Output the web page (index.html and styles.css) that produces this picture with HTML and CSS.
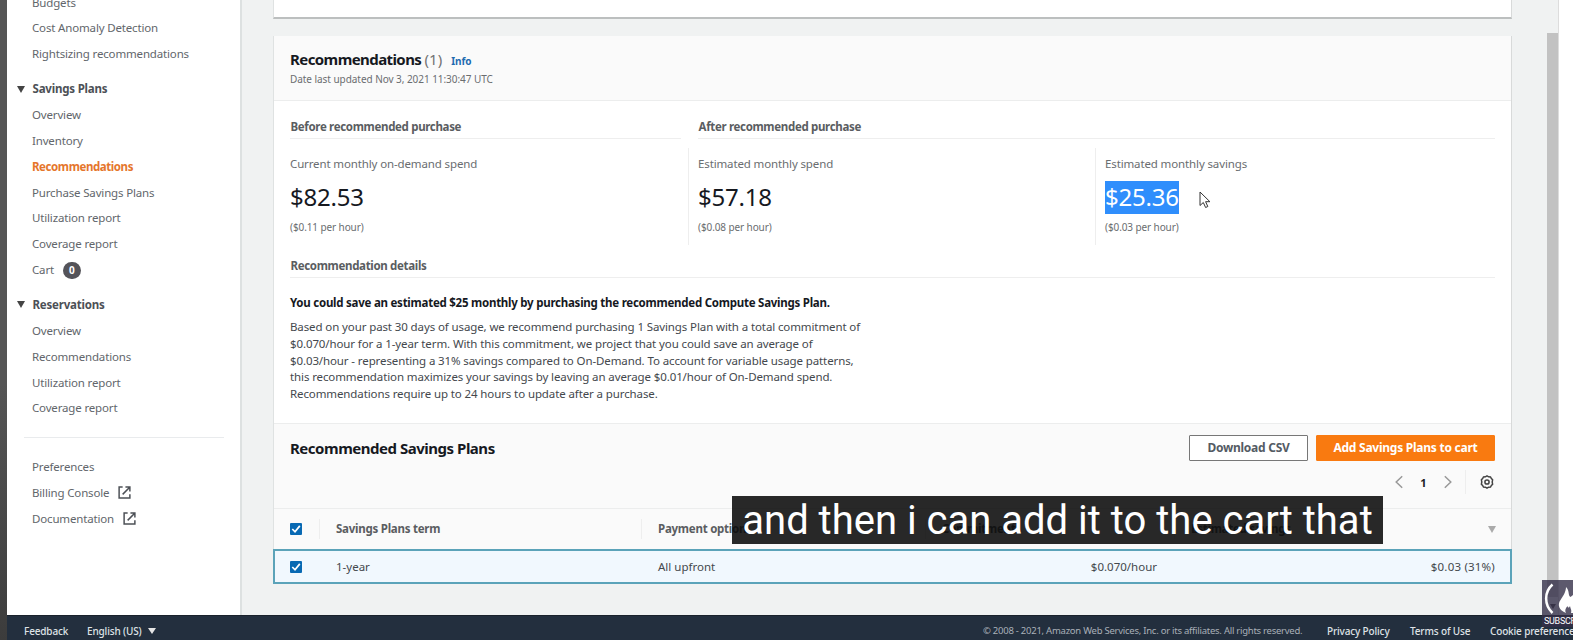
FILE: index.html
```html
<!DOCTYPE html>
<html lang="en">
<head>
<meta charset="utf-8">
<title>Savings Plans recommendations</title>
<link rel="stylesheet" href="styles.css">
</head>
<body>
<div class="frame">
  <div class="screen">
    <div class="workspace">
      <nav class="sidebar">
        <ul class="nav-list nav-first">
          <li>Budgets</li>
          <li>Cost Anomaly Detection</li>
          <li>Rightsizing recommendations</li>
        </ul>
        <h3 class="nav-head"><span class="tri"></span><span>Savings Plans</span></h3>
        <ul class="nav-list">
          <li>Overview</li>
          <li>Inventory</li>
          <li class="active">Recommendations</li>
          <li>Purchase Savings Plans</li>
          <li>Utilization report</li>
          <li>Coverage report</li>
          <li>Cart <span class="badge">0</span></li>
        </ul>
        <h3 class="nav-head"><span class="tri"></span><span>Reservations</span></h3>
        <ul class="nav-list">
          <li>Overview</li>
          <li>Recommendations</li>
          <li>Utilization report</li>
          <li>Coverage report</li>
        </ul>
        <div class="nav-rule"></div>
        <ul class="nav-list">
          <li>Preferences</li>
          <li>Billing Console <svg class="ext" viewBox="0 0 14 14"><path d="M5 1.2H1.2v11.6h11.6V9M8 1.2h4.8V6M12.6 1.4 5 9"/></svg></li>
          <li>Documentation <svg class="ext" viewBox="0 0 14 14"><path d="M5 1.2H1.2v11.6h11.6V9M8 1.2h4.8V6M12.6 1.4 5 9"/></svg></li>
        </ul>
      </nav>
      <main class="content">
        <section class="card card-prev"></section>
        <section class="card">
          <header class="card-head">
            <div class="title-row"><h2 class="title">Recommendations <span class="count">(1)</span></h2><a class="info">Info</a></div>
            <p class="updated">Date last updated Nov 3, 2021 11:30:47 UTC</p>
          </header>
          <div class="card-body">
            <div class="groups">
              <h4 class="sub before">Before recommended purchase</h4>
              <h4 class="sub after">After recommended purchase</h4>
            </div>
            <div class="metrics">
              <div class="metric"><p class="label">Current monthly on-demand spend</p><p class="value"><span>$82.53</span></p><p class="rate">($0.11 per hour)</p></div>
              <div class="metric"><p class="label">Estimated monthly spend</p><p class="value"><span>$57.18</span></p><p class="rate">($0.08 per hour)</p></div>
              <div class="metric"><p class="label">Estimated monthly savings</p><p class="value"><span class="selected">$25.36</span></p><p class="rate">($0.03 per hour)</p></div>
            </div>
            <h4 class="sub details">Recommendation details</h4>
            <p class="lead">You could save an estimated $25 monthly by purchasing the recommended Compute Savings Plan.</p>
            <p class="copy">Based on your past 30 days of usage, we recommend purchasing 1 Savings Plan with a total commitment of<br>$0.070/hour for a 1-year term. With this commitment, we project that you could save an average of<br>$0.03/hour - representing a 31% savings compared to On-Demand. To account for variable usage patterns,<br>this recommendation maximizes your savings by leaving an average $0.01/hour of On-Demand spend.<br>Recommendations require up to 24 hours to update after a purchase.</p>
          </div>
          <div class="plans-head">
            <div class="plans-row">
              <h2 class="title plans-title">Recommended Savings Plans</h2>
              <div class="actions"><button class="btn">Download CSV</button><button class="btn primary">Add Savings Plans to cart</button></div>
            </div>
            <div class="pager">
              <svg class="chev" viewBox="0 0 8 14"><path d="M7.2 1.2 1.2 7l6 5.8"/></svg>
              <span class="page">1</span>
              <svg class="chev" viewBox="0 0 8 14"><path d="m.8 1.2 6 5.8-6 5.8"/></svg>
              <span class="pager-rule"></span>
              <svg class="gear" viewBox="0 0 14 14"><path d="m7 .9 1.600.9 1.900.1.9 1.600 1.200 1.300-.4 2.200.4 2.200-1.200 1.300-.9 1.600-1.900.1-1.600.9-1.600-.9-1.900-.1-.9-1.600L1.400 9.200 1.800 7l-.4-2.200 1.200-1.300.9-1.600 1.900-.1z"/><circle cx="7" cy="7" r="2.100"/></svg>
            </div>
          </div>
          <div class="row row-head">
            <span class="check"><svg viewBox="0 0 12 12"><path d="m2.300 6 2.700 2.800 4.800-5.900"/></svg></span>
            <span class="th th-term">Savings Plans term</span>
            <span class="th th-pay">Payment option</span>
            <span class="th th-commit">Commitment</span>
            <span class="th th-save">Estimated savings</span>
            <span class="tri tri-sort"></span>
          </div>
          <div class="row row-selected">
            <span class="check"><svg viewBox="0 0 12 12"><path d="m2.300 6 2.700 2.800 4.800-5.900"/></svg></span>
            <span class="td-term">1-year</span>
            <span class="td-pay">All upfront</span>
            <span class="td-commit">$0.070/hour</span>
            <span class="td-save">$0.03 (31%)</span>
          </div>
        </section>
      </main>
      <div class="scroll"><div class="thumb"></div><span class="tri tri-scroll"></span></div>
      <div class="edge"></div>
    </div>
    <footer class="footer">
      <span class="f-feedback">Feedback</span>
      <span class="f-lang">English (US)</span><span class="tri tri-foot"></span>
      <span class="copyright">© 2008 - 2021, Amazon Web Services, Inc. or its affiliates. All rights reserved.</span>
      <span class="f-privacy">Privacy Policy</span>
      <span class="f-terms">Terms of Use</span>
      <span class="f-cookie">Cookie preferences</span>
    </footer>
  </div>
  <svg class="cursor" viewBox="0 0 12 18"><path d="M1 1v13.500l3.300-3 2.300 5 2.200-1-2.200-4.800h4.300z"/></svg>
  <div class="caption"><span>and then i can add it to the cart that</span></div>
  <div class="subscribe">
    <svg viewBox="0 0 31 36"><path class="paren" d="M10.500 4.500C2 12 2 25 10.500 33"/><path class="flame" d="M24 7c4 4 1.500 8 4.500 10l2.500-2v18h-2c1-3-.5-4-1-7-1 2-2 2-2.500 0-2 2-3 5-1.500 7-7-3-9-8-5.500-13C21 16 24 12 24 7z"/></svg>
    <span>SUBSCRIBE</span>
  </div>
</div>
</body>
</html>
```
FILE: styles.css
```css
* { box-sizing: border-box; }
body, h2, h3, h4, p, ul { margin: 0; padding: 0; }
body { font-family: "Noto Sans", sans-serif; font-size: 11.5px; color: #545b64; overflow: hidden; }
.frame { position: relative; width: 1573px; height: 640px; overflow: hidden; background: linear-gradient(#555 0, #555 60%, #3c3c3c); padding-left: 7px; }
.screen { height: 640px; display: flex; flex-direction: column; }
.workspace { display: flex; height: 615px; background: #f0f2f2; }

.sidebar { flex: none; width: 235px; background: #fff; border-right: 2px solid #dde1e1; overflow: hidden; white-space: nowrap; }
.nav-list { list-style: none; padding-left: 25px; }
.nav-list li { height: 25.85px; line-height: 25.85px; letter-spacing: -0.16px; color: #62666b; }
.nav-first { margin-top: -10.5px; }
.nav-list .active { color: #e5762c; font-weight: 700; letter-spacing: -0.42px; }
.nav-head { display: flex; align-items: center; gap: 8px; height: 26px; margin-top: 9px; padding-left: 9.5px; font-size: 11.5px; line-height: 26px; color: #4c5056; letter-spacing: -0.2px; }
.tri { display: inline-block; border: 4.5px solid transparent; border-top: 7px solid #444; border-bottom: 0; }
.badge { display: inline-block; width: 18px; height: 17px; margin-left: 6px; border-radius: 9px; background: #545359; color: #fff; font-size: 10px; font-weight: 700; line-height: 17px; text-align: center; }
.nav-rule { width: 200px; height: 1px; margin: 16px 0 16px 17px; background: #e9ebed; }
.ext { width: 13px; height: 13px; margin-left: 6px; vertical-align: -2px; fill: none; stroke: #4c5056; stroke-width: 1.6; }

.content { flex: none; width: 1305px; padding-left: 31px; }
.card { width: 1239px; background: #fff; border-left: 1px solid #dfe2e2; border-right: 1px solid #d8dada; }
.card-prev { height: 19px; margin-bottom: 17px; border-bottom: 2px solid #bcbfbf; }
.card-head { height: 65px; padding: 13px 16px 0; background: #fafafa; border-bottom: 1px solid #eceded; }
.title-row { display: flex; align-items: baseline; height: 22px; }
.title { font-size: 15px; line-height: 21px; letter-spacing: -0.58px; color: #16191f; white-space: nowrap; }
.plans-title { letter-spacing: -0.48px; }
.count { font-weight: 400; letter-spacing: 0; color: #737373; }
.info { margin-left: 9px; font-size: 10px; font-weight: 700; letter-spacing: -0.1px; color: #1f6bb0; }
.updated { font-size: 10px; line-height: 16px; letter-spacing: -0.05px; color: #6a6d70; }
.card-body { height: 322px; padding: 16px 16px 0; }
.groups { display: grid; grid-template-columns: 391px 1fr; gap: 17px; }
.sub { height: 22px; border-bottom: 1px solid #eee; font-size: 11.5px; line-height: 20px; letter-spacing: -0.33px; color: #5a5d61; padding-left: 0.5px; }
.metrics { display: grid; grid-template-columns: 398px 407px 1fr; height: 97px; margin-top: 9px; }
.metric { padding-top: 7px; }
.metric + .metric { padding-left: 9px; border-left: 1px solid #eee; }
.label { line-height: 18px; letter-spacing: -0.13px; color: #6a6d70; }
.value { height: 33px; margin-top: 8px; font-size: 24px; line-height: 32px; letter-spacing: -0.2px; color: #16191f; }
.value span { display: inline-block; height: 33px; }
.value .selected { background: #2f8efc; color: #fff; }
.rate { margin-top: 4px; font-size: 10px; line-height: 18px; letter-spacing: -0.1px; color: #6a6d70; }
.details { margin-top: 11px; }
.lead { margin-top: 16px; font-weight: 700; line-height: 18px; letter-spacing: -0.25px; color: #16191f; }
.copy { margin-top: 7px; line-height: 16.75px; letter-spacing: -0.11px; color: #44484d; white-space: nowrap; }

.plans-head { height: 86px; background: #fafafa; border-top: 1px solid #eceded; border-bottom: 1px solid #eceded; padding: 11px 16px 0; }
.plans-row { display: flex; justify-content: space-between; align-items: center; }
.actions { display: flex; gap: 8px; }
.btn { width: 119px; height: 26px; padding: 0; border: 1px solid #777; border-radius: 1px; background: #fff; color: #545b64; font: 700 12px/24px "Noto Sans", sans-serif; letter-spacing: -0.25px; }
.primary { width: 179px; border-color: #f97a10; background: #f97a10; color: #fff; }
.pager { display: flex; align-items: center; justify-content: flex-end; height: 24px; margin-top: 9px; padding-right: 1px; }
.chev { width: 8px; height: 14px; fill: none; stroke: #999; stroke-width: 1.5; }
.page { width: 41px; text-align: center; font-weight: 700; font-size: 11px; color: #222; }
.pager-rule { width: 1px; height: 24px; margin: 0 14px 0 13px; background: #eee; }
.gear { width: 14px; height: 14px; fill: none; stroke: #444; stroke-width: 1.5; }

.row { display: flex; align-items: center; padding-left: 16px; }
.row-head { height: 40px; background: #fafafa; color: #5a5d61; font-weight: 700; letter-spacing: -0.25px; }
.row-selected { height: 35px; margin: 0 -1px; border: 2px solid #5ba3b9; background: #f1f8fe; padding-left: 15px; color: #44484d; }
.check { flex: none; width: 12px; height: 12px; border-radius: 1px; background: #0869b3; display: flex; }
.check svg { width: 12px; height: 12px; fill: none; stroke: #fff; stroke-width: 1.7; }
.th { flex: none; display: block; height: 20px; line-height: 20px; border-left: 1px solid #eee; padding-left: 16px; }
.th-term { width: 322px; margin-left: 17px; }
.th-pay { width: 284px; }
.th-commit { width: 249px; }
.th-save { width: 314px; }
.tri-sort { border-top-color: #aaa; }
.td-term { width: 322px; margin-left: 34px; }
.td-pay { width: 399px; }
.td-commit { width: 100px; text-align: right; }
.td-save { margin-left: auto; margin-right: 15px; letter-spacing: 0.2px; }

.scroll { flex: none; width: 11px; background: #f0f2f2; padding-top: 33px; display: flex; flex-direction: column; align-items: center; }
.thumb { width: 11px; height: 564px; background: #c2c2c2; }
.tri-scroll { margin-top: 7px; border-width: 5px 3.5px 0; }
.edge { flex: 1; background: #fff; border-left: 1px solid #ddd; }

.footer { display: flex; align-items: center; height: 25px; padding: 6px 0 0 17px; background: #232f3e; border-top: 1px solid #1a222c; color: #dfe2e6; font-size: 10px; line-height: 18px; letter-spacing: -0.15px; white-space: nowrap; overflow: hidden; font-weight: 500; }
.footer > span { flex: none; }
.f-feedback { width: 63px; }
.f-lang { width: 61px; }
.tri-foot { border-width: 6px 4px 0; border-top-color: #e5e5e5; }
.copyright { width: 344px; margin-left: 827px; font-size: 9.5px; font-weight: 400; letter-spacing: -0.25px; color: #a9b0b8; }
.f-privacy { width: 83px; }
.f-terms { width: 80px; }

.cursor { position: absolute; left: 1199px; top: 191px; width: 12px; height: 18px; fill: #fff; stroke: #333; stroke-width: 1; }
.caption { position: absolute; left: 732px; top: 496px; width: 651px; height: 48px; background: rgba(8, 8, 8, 0.87); color: #fff; font: 40px/50px Roboto, sans-serif; text-align: center; white-space: nowrap; }
.subscribe { position: absolute; left: 1542px; top: 580px; width: 40px; height: 47px; background: rgba(52, 48, 72, 0.8); color: #fff; font: 400 9px/10px Roboto, sans-serif; letter-spacing: -0.3px; }
.subscribe svg { display: block; width: 31px; height: 36px; }
.subscribe span { display: block; padding-left: 2px; }
.paren { fill: none; stroke: #fff; stroke-width: 2.5; }
.flame { fill: #fff; }
```
